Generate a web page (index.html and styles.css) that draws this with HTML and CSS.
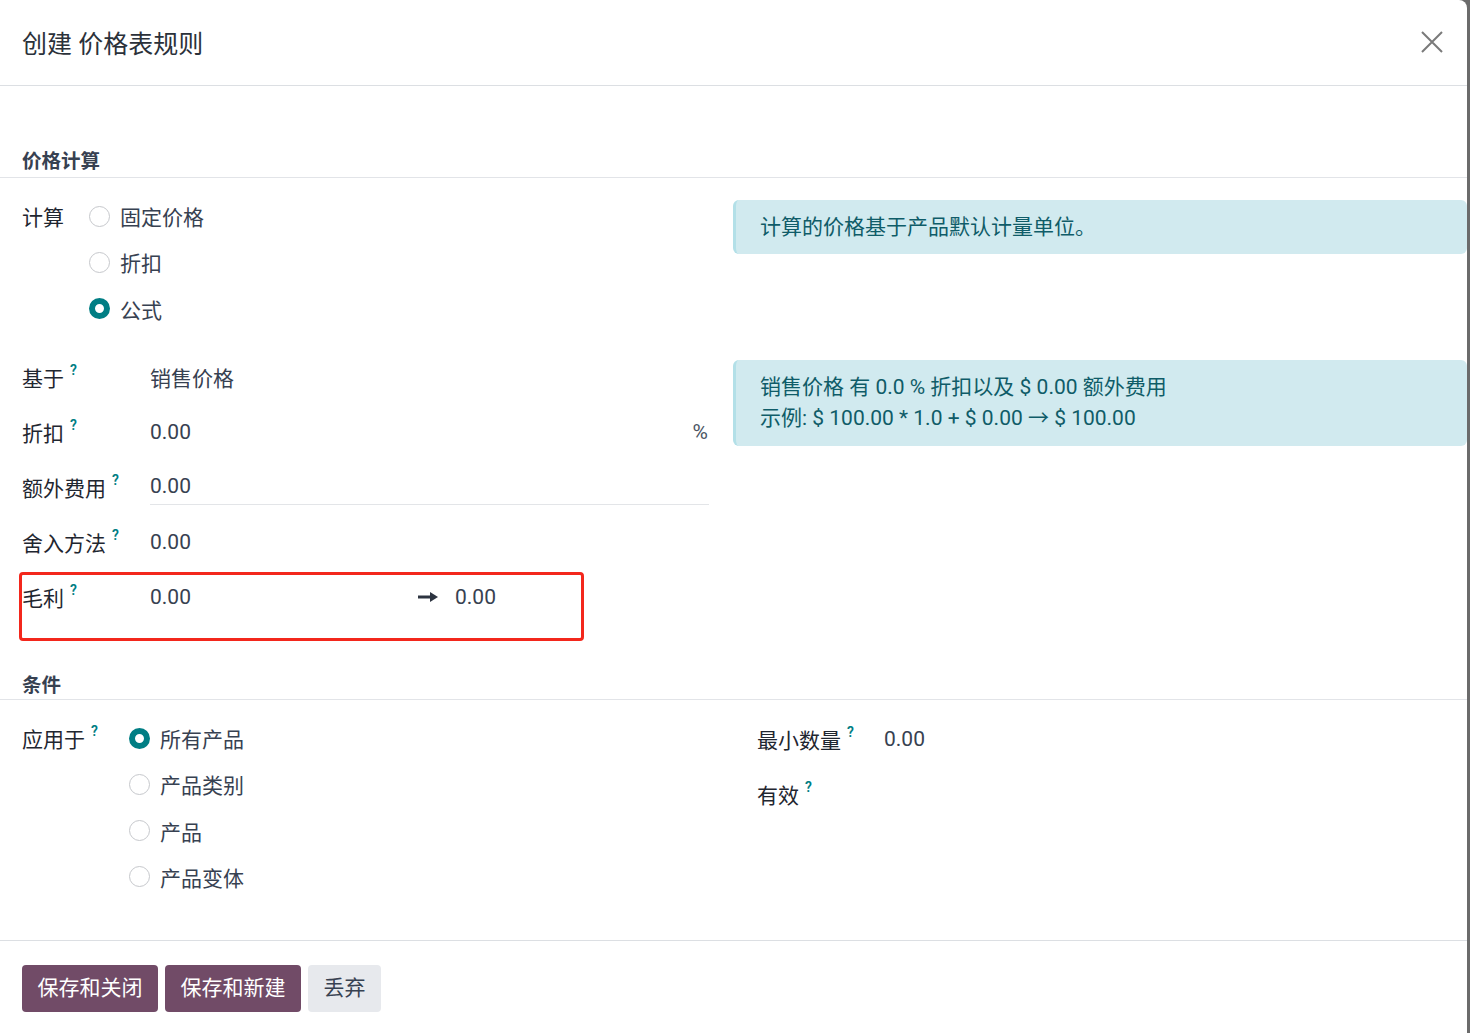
FILE: index.html
```html
<!DOCTYPE html>
<html lang="zh-CN">
<head>
<meta charset="utf-8">
<title>创建 价格表规则</title>
<link rel="stylesheet" href="styles.css">
</head>
<body>
<div class="modal">
  <header class="modal-header">
    <h4 class="modal-title">创建 价格表规则</h4>
    <button class="close" aria-label="关闭">
      <svg width="22" height="22" viewBox="0 0 22 22"><path d="M1 1 L21 21 M21 1 L1 21" stroke="#7a7a7a" stroke-width="2" fill="none"/></svg>
    </button>
  </header>

  <main class="modal-body">
    <div class="sep">价格计算</div>

    <div class="group group-a">
      <div class="col-left">
        <div class="radio-field">
          <div class="lbl lbl-calc">计算</div>
          <div class="options">
            <div class="opt"><span class="radio"></span><span>固定价格</span></div>
            <div class="opt"><span class="radio"></span><span>折扣</span></div>
            <div class="opt"><span class="radio checked"></span><span>公式</span></div>
          </div>
        </div>
      </div>
      <div class="col-right">
        <div class="alert alert-1">计算的价格基于产品默认计量单位。</div>
      </div>
    </div>

    <div class="group group-b">
      <div class="col-left">
        <div class="fields">
          <div class="row"><div class="lbl lbl-b">基于<span class="help">?</span></div><div class="val">销售价格</div></div>
          <div class="row"><div class="lbl lbl-b">折扣<span class="help">?</span></div><div class="val val-flex"><span>0.00</span><span class="unit">%</span></div></div>
          <div class="row"><div class="lbl lbl-b">额外费用<span class="help">?</span></div><div class="val val-line">0.00</div></div>
          <div class="row"><div class="lbl lbl-b">舍入方法<span class="help">?</span></div><div class="val">0.00</div></div>
          <div class="row row-margin">
            <div class="lbl lbl-b">毛利<span class="help">?</span></div>
            <div class="val margin">
              <span class="m1">0.00</span>
              <svg class="arrow" width="20" height="12" viewBox="0 0 20 12"><path d="M0 6 H14" stroke="#2d3440" stroke-width="3"/><path d="M12 1 L20 6 L12 11 Z" fill="#2d3440"/></svg>
              <span class="m2">0.00</span>
            </div>
            <div class="highlight"></div>
          </div>
        </div>
      </div>
      <div class="col-right">
        <div class="alert alert-2">销售价格 有 0.0 % 折扣以及 $ 0.00 额外费用<br>示例: $ 100.00 * 1.0 + $ 0.00 → $ 100.00</div>
      </div>
    </div>

    <div class="sep sep-2">条件</div>

    <div class="group group-c">
      <div class="col-left">
        <div class="radio-field">
          <div class="lbl lbl-apply">应用于<span class="help">?</span></div>
          <div class="options">
            <div class="opt"><span class="radio checked"></span><span>所有产品</span></div>
            <div class="opt"><span class="radio"></span><span>产品类别</span></div>
            <div class="opt"><span class="radio"></span><span>产品</span></div>
            <div class="opt"><span class="radio"></span><span>产品变体</span></div>
          </div>
        </div>
      </div>
      <div class="col-right col-right-c">
        <div class="row"><div class="lbl lbl-r">最小数量<span class="help">?</span></div><div class="val">0.00</div></div>
        <div class="row"><div class="lbl lbl-r">有效<span class="help">?</span></div><div class="val"></div></div>
      </div>
    </div>
  </main>

  <footer class="modal-footer">
    <button class="btn btn-primary">保存和关闭</button>
    <button class="btn btn-primary">保存和新建</button>
    <button class="btn btn-secondary">丢弃</button>
  </footer>
</div>
</body>
</html>
```

FILE: styles.css
```css
* { box-sizing: border-box; }

html, body {
  margin: 0;
  padding: 0;
  height: 100%;
}

body {
  background: #6b6b6b;
  font-family: "Roboto", "Noto Sans CJK SC", sans-serif;
  font-size: 21px;
  color: #374151;
  overflow: hidden;
}

.modal {
  width: 1467px;
  height: 1033px;
  background: #fff;
  border-top-right-radius: 8px;
  display: flex;
  flex-direction: column;
}

.modal-header {
  height: 86px;
  flex: 0 0 86px;
  border-bottom: 1px solid #dcdfe3;
  display: flex;
  align-items: center;
  justify-content: space-between;
  padding: 0 24px 0 22px;
}

.modal-title {
  margin: 0;
  font-size: 25px;
  font-weight: 400;
  color: #2b313a;
  line-height: 30px;
  padding-top: 4px;
}

.close {
  border: 0;
  background: none;
  padding: 0;
  width: 22px;
  height: 22px;
  display: flex;
  margin-bottom: 2px;
}

.modal-body {
  flex: 1 1 auto;
  padding-top: 61px;
}

.sep {
  height: 31px;
  line-height: 30px;
  padding-left: 22px;
  font-size: 19.5px;
  font-weight: 700;
  color: #374151;
  border-bottom: 1px solid #e2e4e8;
}

.sep-2 { margin-top: 45px; height: 30px; line-height: 32px; }

.group {
  display: grid;
  grid-template-columns: 687px 734px;
  column-gap: 24px;
  padding-left: 22px;
}

.group-a { padding-top: 15px; }
.group-b { padding-top: 18px; }
.group-c { padding-top: 15px; }

.radio-field {
  display: flex;
  align-items: flex-start;
}

.lbl {
  color: #1f2630;
  white-space: nowrap;
  display: flex;
  align-items: center;
}

.lbl-calc { width: 67px; height: 46px; }
.lbl-apply { width: 107px; height: 46px; }

.options {
  display: flex;
  flex-direction: column;
}

.opt {
  height: 46.3px;
  display: flex;
  align-items: center;
  gap: 10px;
  color: #374151;
}

.radio {
  width: 21px;
  height: 21px;
  border-radius: 50%;
  border: 1px solid #c6c8cc;
  background: #fff;
  flex: 0 0 21px;
}

.radio.checked {
  border: 6px solid #017e84;
}

.help {
  color: #017e84;
  font-size: 14px;
  font-weight: 600;
  line-height: 14px;
  margin-left: 6px;
  align-self: flex-start;
  margin-top: 13px;
}

.lbl-calc .help, .lbl-apply .help { margin-top: 9px; }

.alert {
  border-radius: 6px;
  background: #d1eaef;
  border-left: 3px solid #b3e0e8;
  color: #0f5c68;
  padding: 0 24px;
}

.alert-1 {
  margin-top: 7px;
  height: 54px;
  line-height: 54px;
}

.alert-2 {
  margin-top: 10px;
  height: 86px;
  padding-top: 12px;
  line-height: 31px;
}

.fields {
  display: flex;
  flex-direction: column;
}

.row {
  height: 55px;
  display: flex;
  align-items: center;
}

.lbl-b { width: 128px; height: 55px; }
.lbl-r { width: 127px; height: 55px; }

.val {
  flex: 1 1 auto;
  color: #374151;
  height: 55px;
  display: flex;
  align-items: center;
}

.val-flex { justify-content: space-between; padding-right: 1px; }

.unit { color: #4b5563; }

.val-line {
  border-bottom: 1px solid #e3e5e8;
  height: 45px;
  margin-bottom: 10px;
  padding-top: 8px;
}

.row-margin { position: relative; }

.m1 { width: 268px; }
.arrow { margin-right: 17px; }

.highlight {
  position: absolute;
  left: -3px;
  top: 2px;
  width: 565px;
  height: 69px;
  border: 3px solid #f3271c;
  border-radius: 4px;
  pointer-events: none;
}

.col-right-c {
  padding-left: 24px;
  margin-top: -3px;
}

.modal-footer {
  flex: 0 0 auto;
  height: 93px;
  border-top: 1px solid #dcdfe3;
  padding: 24px 22px 0;
  display: flex;
  align-items: flex-start;
  gap: 7px;
}

.btn {
  height: 47px;
  border: 0;
  border-radius: 4px;
  padding: 0 15.5px;
  font-family: "Roboto", "Noto Sans CJK SC", sans-serif;
  font-size: 21px;
  line-height: 47px;
  cursor: pointer;
}

.btn-primary {
  background: #714b67;
  color: #fff;
}

.btn-secondary {
  background: #e7e9ed;
  color: #374151;
}
```
